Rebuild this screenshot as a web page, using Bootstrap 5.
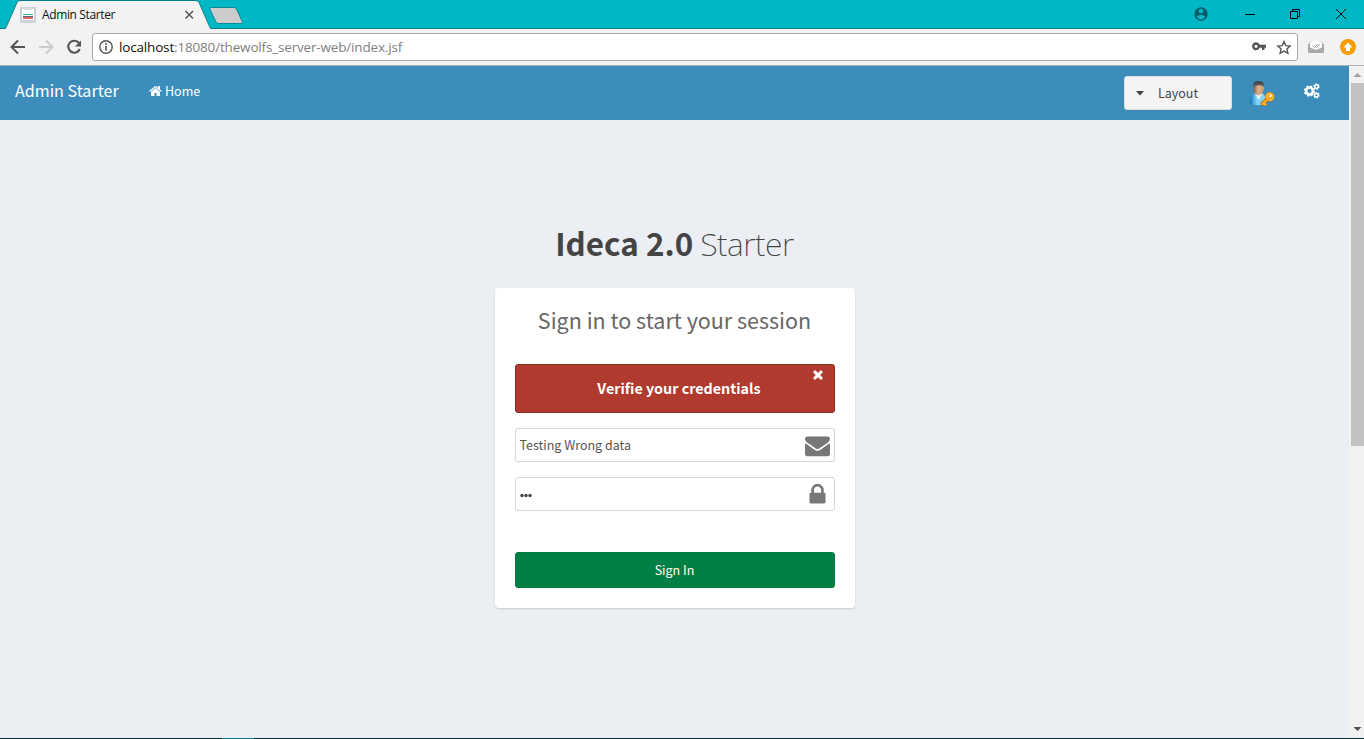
<!DOCTYPE html>
<html lang="en">
<head>
<meta charset="utf-8">
<title>Admin Starter</title>
<link href="https://cdn.jsdelivr.net/npm/bootstrap@5.3.0/dist/css/bootstrap.min.css" rel="stylesheet">
<style>
body{font-family:"Noto Sans CJK SC","Noto Sans",sans-serif;font-size:12.5px;line-height:20px;height:739px;overflow:hidden;background:#ebeff4;color:#444}
svg{display:block;flex:none}
.titlebar{height:29px;background:#00b7c6;position:relative}
.tab-shape{position:absolute;left:0;top:0}
.tab-label{width:197px;padding-left:20px;position:relative;height:29px;color:#111;font:12px/29px "Open Sans",sans-serif;letter-spacing:-.37px}
.toolbar{height:37px;background:#f2f2f2;border-bottom:1px solid #b0b0b0;padding:0 8px 0 9px}
.address{height:28px;border:1px solid #a9a9a9;border-radius:3px;background:#fff;width:1206px;margin-left:9px;padding:0 6px;font:13.5px/26px "Open Sans",sans-serif;color:#808080;letter-spacing:-.17px}
.address b{font-weight:400;color:#111}
.viewport{height:672px}
.topbar{height:54px;background:#3c8dbc;color:#fff;padding:0 28px 0 15px}
.brand-name{font-size:16.1px;width:134px;line-height:48px;height:54px}
.home-link{height:50px;margin-bottom:4px}
.layout-btn{width:108px;height:34px;background:#f4f4f4;border:1px solid #ddd;border-radius:3px;padding:0 0 0 11px;color:#444;margin-right:18px}
.login-title{margin-top:101px;height:67px;line-height:44px;font-size:31.4px;color:#444}
.login-title b{font-weight:700}
.login-title span{font-family:"Noto Sans",sans-serif;font-size:32px;font-weight:200;letter-spacing:-.5px}
.login-box{width:360px;height:320px;background:#fff;border:0;border-radius:4px;box-shadow:0 1px 2px rgba(0,0,0,.15);padding:15px 20px 20px}
.login-box h1{font-size:21.5px;line-height:34px;height:61px;margin:0;color:#666;font-weight:400;text-align:center}
.notice{height:49px;border:1px solid #8b2d23;border-radius:3px;background:#b03a2e;color:#fff;font-size:14.3px;font-weight:700;padding:0 0 2px 9px;margin-bottom:15px;position:relative}
.notice svg{position:absolute;right:10px;top:4px}
.field{height:34px;border:1px solid #d2d6de;border-radius:3px;padding:0 4px;margin-bottom:15px;color:#555}
.submit{height:36px;background:#008045;border:1px solid #00793f;border-radius:3px;color:#fff;font-size:12.5px;line-height:20px;margin-top:26px;padding:0}
.scroller{width:15px;background:#f1f1f1}
.thumb{width:13px;height:363px;background:#c1c1c1}
.taskline{height:1px;background:#032f3b;padding-left:222px}
.taskline i{display:block;width:32px;height:1px;background:#007f8b}
</style>
</head>
<body>
<div class="titlebar d-flex align-items-center">
  <svg class="tab-shape" width="1364" height="29"><path d="M-1 28.500h6.500L17 2.500q1-2 3-2H195q3 0 4 2L210.500 28.500H1365V30H-1z" fill="#f2f2f2" stroke="#087e8a"/><path d="M211.500 7.500H234q2 0 2.700 2l5.500 12q.8 2-1.200 2H218.500q-2 0-2.800-2L209.800 9q-.6-1.500 1.700-1.500z" fill="#ccc" stroke="#098a96"/></svg>
  <div class="tab-label d-flex align-items-center">
    <svg width="16" height="16" style="margin-top:1px" shape-rendering="crispEdges"><path fill="#ccd1dc" d="M0 0h16v16H0z"/><path fill="#fff" d="M2 2h12v11H2z"/><path fill="#ddd" d="M4 1h8v2H4z"/><path fill="#35b384" d="M3 7h10v1H3z"/><path fill="#5a6b80" d="M3 9h10v1H3z"/><path fill="#e06a68" d="M3 10h10v2H3z"/></svg>
    <span style="margin-left:6px">Admin Starter</span>
    <svg class="ms-auto" width="13" height="13"><path d="M1.500 3l7.500 7.500m0-7.500-7.500 7.500" stroke="#5a5a5a" stroke-width="1.600"/></svg>
  </div>
  <svg class="ms-auto" width="170" height="28"><g><circle cx="7" cy="13" r="6.700" fill="#065d65"/><circle cx="7" cy="10" r="2.300" fill="#00b7c6"/><path d="M2.700 15.500q4.300-3.500 8.600 0-1.500 3-4.300 3t-4.300-3z" fill="#00b7c6"/></g><g fill="none" stroke="#000"><path d="M51 13.500h10M98.500 10.500v-2h7v7h-2M96.500 10.500h7v7h-7zM142 8l10 10m0-10-10 10"/></g></svg>
</div>
<div class="toolbar d-flex align-items-center">
  <svg width="74" height="18" viewBox="0 0 74 18" fill="none" stroke-width="2"><path d="M16 9H3m6-6.500L2.500 9 9 15.500" stroke="#555"/><path d="M30 9h13m-6-6.500L43.500 9 37 15.500" stroke="#ccc"/><path d="M70 5a6 6 0 1 0 .8 6" stroke="#555" stroke-width="2.100"/><path d="M72 2.500V8.500h-6z" fill="#555"/></svg>
  <div class="address d-flex align-items-center">
    <svg width="14" height="14"><circle cx="7" cy="7" r="6.200" fill="none" stroke="#555" stroke-width="1.400"/><path d="M6.200 3.300h1.600v1.600H6.200zm0 2.700h1.600v4.800H6.200z" fill="#555"/></svg>
    <span style="margin-left:6px"><b>localhost</b>:18080/thewolfs_server-web/index.jsf</span>
    <svg class="ms-auto" width="40" height="16"><path d="M8.700 5.700A4 4 0 1 0 8.700 8.800H11V11H13.500V8.800h1.500V5.700zM5 5.700a1.600 1.600 0 1 1 0 3.200 1.600 1.600 0 0 1 0-3.200z" fill="#555" fill-rule="evenodd"/><path d="M33 2.500l1.800 4.100 4.400.4-3.300 3 1 4.400-3.900-2.300-3.900 2.300 1-4.400-3.300-3 4.400-.4z" fill="none" stroke="#555" stroke-width="1.400"/></svg>
  </div>
  <svg style="margin-left:10px" width="17" height="16"><path d="M0 5.500L3 2.500h10l3 3V14H0z" fill="#a5a5a5"/><path d="M2 3.500L8 1l6 2.500V8.500L8 11 2 8.500z" fill="#fff"/><path d="M4.500 6.500l2 2 3-3.500M8 8l.8.500 3-3.500" fill="none" stroke="#999"/><path d="M0 14l5-4.500m11 4.500-5-4.500" stroke="#c5c5c5" stroke-width=".7"/></svg>
  <svg class="ms-auto" width="16" height="16"><circle cx="8" cy="8" r="8" fill="#f59c00"/><path d="M8 3.500L12.500 8.500H10V12H6V8.500H3.500z" fill="#fff"/></svg>
</div>
<div class="viewport d-flex">
  <main class="flex-grow-1">
    <nav class="topbar d-flex align-items-center">
      <div class="brand-name">Admin Starter</div>
      <div class="home-link d-flex align-items-center"><svg width="13" height="14" viewBox="64 150 1664 1500" style="margin:0 3px 0 0" fill="#fff"><path d="M1472 992v480q0 26-19 45t-45 19h-384v-384h-256v384h-384q-26 0-45-19t-19-45v-480q0-1 .5-3t.5-3l575-474 575 474q1 2 1 6zm223-69l-62 74q-8 9-21 11h-3q-13 0-21-7l-692-577-692 577q-12 8-24 7-13-2-21-11l-62-74q-8-10-7-23.500t11-21.500l719-599q32-26 76-26t76 26l244 204v-195q0-14 9-23t23-9h192q14 0 23 9t9 23v408l219 182q10 8 11 21.500t-7 23.500z"/></svg><span>Home</span></div>
      <div class="layout-btn d-flex align-items-center ms-auto"><svg width="8" height="5"><path d="M0 0h8L4 4.500z" fill="#444"/></svg><span style="margin-left:14px">Layout</span></div>
      <svg width="25" height="26" viewBox="0 0 25 26"><defs><linearGradient id="shirt" x2="1"><stop stop-color="#0874b8"/><stop offset=".4" stop-color="#7fd0f5"/><stop offset="1" stop-color="#8fd4f4"/></linearGradient><linearGradient id="face" x2="1"><stop stop-color="#6e5040"/><stop offset=".45" stop-color="#d9b08a"/><stop offset="1" stop-color="#d09a70"/></linearGradient><linearGradient id="hair" x2="0" y2="1"><stop stop-color="#34393e"/><stop offset="1" stop-color="#80868a"/></linearGradient></defs><path d="M0 23.500Q0 15 4.500 13.500h8Q16 15 16 23.500q-8 3.500-16 0z" fill="url(#shirt)"/><path d="M5 13.500L8.500 20l4-6.500z" fill="#eef8fc"/><path d="M3 7q0-5.500 5.500-5.500T14 7q0 6-4 8-1.500.8-3 0-4-2-4-8z" fill="url(#face)"/><path d="M2.800 9Q1.300 1 8.300 1 15 1 14.300 7.500 13.300 5 9 5.300 4.500 5 4.300 9.500z" fill="url(#hair)"/><path d="M11.500 25l7-7" stroke="#c76b05" stroke-width="4"/><path d="M13.500 22.500l3 3" stroke="#d87a0a" stroke-width="2.600"/><path d="M12 24.500l7-7M14 23l2 2" stroke="#ffb92f" stroke-width="2"/><circle cx="19.800" cy="16.800" r="3.200" fill="#f3c05e" stroke="#d87a0a" stroke-width="3.200"/><circle cx="19.800" cy="16.800" r="3.100" fill="none" stroke="#ffb834" stroke-width="2.200"/><circle cx="20.800" cy="15.800" r="1.300" fill="#e9f2f7"/></svg>
      <svg style="margin:-5px 0 0 29px" width="17" height="16" fill="none" stroke="#fff"><circle cx="5.500" cy="8" r="3.400" stroke-width="2.500"/><circle cx="5.500" cy="8" r="4.900" stroke-width="1.500" stroke-dasharray="2.200 1.648"/><circle cx="12.500" cy="3.600" r="1.800" stroke-width="1.500"/><circle cx="12.500" cy="3.600" r="2.700" stroke-width="1.100" stroke-dasharray="1.414 1.414"/><circle cx="12.500" cy="12.200" r="1.800" stroke-width="1.500"/><circle cx="12.500" cy="12.200" r="2.700" stroke-width="1.100" stroke-dasharray="1.414 1.414"/></svg>
    </nav>
    <div class="login-title text-center"><b>Ideca 2.0</b> <span>Starter</span></div>
    <section class="login-box card mx-auto">
      <h1>Sign in to start your session</h1>
      <div class="notice d-flex align-items-center justify-content-center"><span>Verifie your credentials</span><svg width="12" height="12" viewBox="150 200 1500 1500" fill="#fff"><path d="M1490 1322q0 40-28 68l-136 136q-28 28-68 28t-68-28l-294-294-294 294q-28 28-68 28t-68-28l-136-136q-28-28-28-68t28-68l294-294-294-294q-28-28-28-68t28-68l136-136q28-28 68-28t68 28l294 294 294-294q28-28 68-28t68 28l136 136q28 28 28 68t-28 68l-294 294 294 294q28 28 28 68z"/></svg></div>
      <div class="field d-flex align-items-center justify-content-between"><span class="typed">Testing Wrong data</span><svg width="25" height="25" viewBox="0 0 1792 1792" fill="#777"><path d="M1792 710v794q0 66-47 113t-113 47h-1472q-66 0-113-47t-47-113v-794q44 49 101 87 362 246 497 345 57 42 92.500 65.500t94.500 48 110 24.500h2q51 0 110-24.500t94.500-48 92.500-65.500q170-123 498-345 57-39 100-87zm0-294q0 79-49 151t-122 123q-376 261-468 325-10 7-42.500 31t-54 38.500-52 32.500-57.500 27-50 9h-2q-23 0-50-9t-57.500-27-52-32.500-54-38.500-42.500-31q-91-64-262-182.500t-205-142.500q-62-42-117-115.500t-55-136.500q0-78 41.500-130t118.500-52h1472q65 0 112.500 47t47.500 113z"/></svg></div>
      <div class="field d-flex align-items-center justify-content-between"><svg width="13" height="5" style="margin-top:2px" fill="#444"><circle cx="2" cy="2.500" r="1.700"/><circle cx="6" cy="2.500" r="1.700"/><circle cx="10" cy="2.500" r="1.700"/></svg><svg width="25" height="25" viewBox="0 0 1792 1792" fill="#777"><path d="M640 768h512v-192q0-106-75-181t-181-75-181 75-75 181v192zm832 96v576q0 40-28 68t-68 28h-960q-40 0-68-28t-28-68v-576q0-40 28-68t68-28h32v-192q0-184 132-316t316-132 316 132 132 316v192h32q40 0 68 28t28 68z"/></svg></div>
      <button class="submit btn w-100">Sign In</button>
    </section>
  </main>
  <div class="scroller d-flex flex-column align-items-end"><svg width="13" height="17"><path d="M2.500 11h8l-4-4z" fill="#a3a3a3"/></svg><div class="thumb"></div><svg class="mt-auto" width="13" height="17"><path d="M2.500 6h8l-4 4z" fill="#505050"/></svg></div>
</div>
<div class="taskline"><i></i></div>
</body>
</html>
